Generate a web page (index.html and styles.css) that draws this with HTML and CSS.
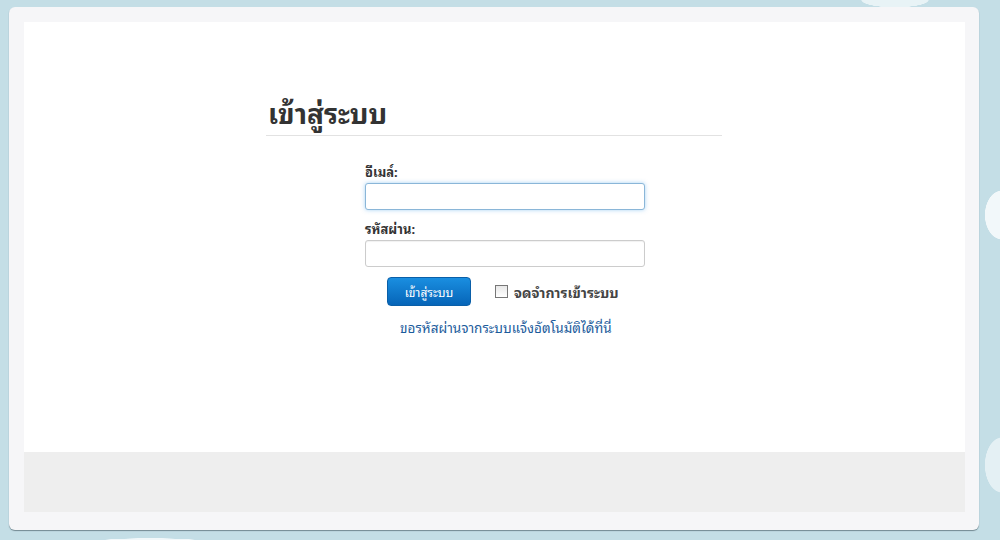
FILE: index.html
```html
<!DOCTYPE html>
<html lang='th'>

<head>
    <meta charset='UTF-8'>
    <title>เข้าสู่ระบบ</title>
    <link rel="stylesheet" href="styles.css">
</head>

<body>
    <div class='panel'>
        <div class='content'>
            <div class='login'>
                <h1>เข้าสู่ระบบ</h1>

                <form class='login-form'>
                    <div class='form-group'>
                        <label for='email'>อีเมล์:</label>
                        <input type='text' id='email' class='focused'>
                    </div>

                    <div class='form-group'>
                        <label for='password'>รหัสผ่าน:</label>
                        <input type='password' id='password'>
                    </div>

                    <div class='actions'>
                        <button type='button'>เข้าสู่ระบบ</button>
                        <label class='remember'><span class='box'></span>จดจำการเข้าระบบ</label>
                    </div>

                    <a class='forgot' href='#'>ขอรหัสผ่านจากระบบแจ้งอัตโนมัติได้ที่นี่</a>
                </form>
            </div>
        </div>
        <div class='footer'></div>
    </div>
</body>

</html>
```

FILE: styles.css
```css
body {
    margin: 0;
    padding: 7px 0 0 9px;
    height: 540px;
    box-sizing: border-box;
    overflow: hidden;
    background-color: #c4dee6;
    background-image:
        radial-gradient(ellipse 55px 12px at 895px 0px, #e8f3f6 60%, transparent 62%),
        radial-gradient(ellipse 140px 16px at 150px 548px, #f2f8fa 60%, transparent 62%),
        radial-gradient(ellipse 28px 40px at 1002px 215px, #f2f8fa 60%, transparent 62%),
        radial-gradient(ellipse 28px 45px at 1002px 465px, #e4f0f4 60%, transparent 62%);
    font-family: "Noto Sans Thai Looped", Tahoma, "Noto Sans Thai", "Liberation Sans", sans-serif;
    color: #333;
}

.panel {
    width: 970px;
    height: 523px;
    box-sizing: border-box;
    padding: 15px 14px 18px 15px;
    background-color: #f6f6f8;
    border-radius: 6px;
    box-shadow: 0 1px 1px rgba(60, 80, 90, 0.6);
}

.content {
    height: 430px;
    background-color: #fff;
    padding-top: 70px;
    box-sizing: border-box;
}

.footer {
    height: 60px;
    background-color: #eeeeee;
}

.login {
    width: 456px;
    margin-left: 242px;
}

h1 {
    margin: 0;
    padding: 0 0 3px 2px;
    font-size: 28px;
    line-height: 40px;
    font-weight: bold;
    color: #333;
    border-bottom: 1px solid #e2e2e2;
}

.login-form {
    width: 280px;
    margin: 27px 0 0 99px;
}

.form-group {
    margin-bottom: 10px;
}

.form-group label {
    display: block;
    font-size: 13px;
    font-weight: bold;
    line-height: 18px;
    margin-bottom: 0;
}

.form-group input {
    width: 100%;
    height: 27px;
    box-sizing: border-box;
    border: 1px solid #cccccc;
    border-radius: 3px;
    box-shadow: inset 0 1px 1px rgba(0, 0, 0, 0.06);
    outline: none;
}

.form-group input.focused {
    border-color: #8ab6d8;
    box-shadow: 0 0 4px rgba(82, 168, 236, 0.5);
}

.actions {
    display: flex;
    align-items: center;
    margin-left: 22px;
}

.actions button {
    width: 84px;
    height: 29px;
    border: 1px solid #0a5fa8;
    border-radius: 4px;
    background: linear-gradient(#1a8ee0, #0665b8);
    color: #fff;
    font-family: inherit;
    font-size: 12px;
    cursor: pointer;
}

.remember {
    display: flex;
    align-items: center;
    margin-left: 24px;
    font-size: 14px;
    font-weight: bold;
    color: #444;
}

.remember .box {
    width: 11px;
    height: 11px;
    border: 1px solid #777;
    background: linear-gradient(#e8e8e8, #fff);
    margin-right: 6px;
}

.forgot {
    display: block;
    margin: 10px 0 0 35px;
    font-size: 13.5px;
    color: #1c5c9c;
    text-decoration: none;
}
```
